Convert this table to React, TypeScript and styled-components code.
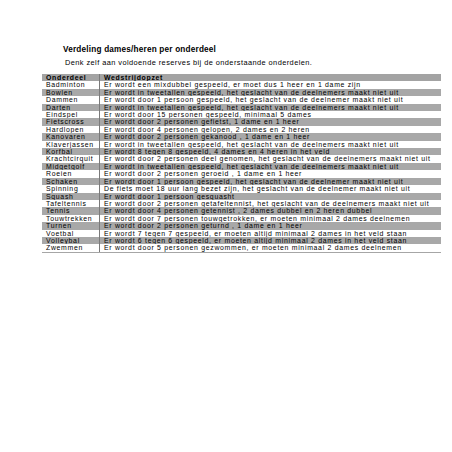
import React from 'react';
import styled, { createGlobalStyle } from 'styled-components';

const GlobalStyle = createGlobalStyle`
  html, body {
    margin: 0;
    padding: 0;
    background: #ffffff;
  }
  body {
    font-family: "Liberation Sans", Arial, sans-serif;
    color: #000000;
  }
`;

const Page = styled.div`
  width: 452px;
  height: 452px;
  box-sizing: border-box;
  padding: 45px 11px 0 42px;
  background: #ffffff;
`;

const Title = styled.h1`
  margin: 0 0 0 21px;
  font-size: 8.2px;
  letter-spacing: 0.2px;
  line-height: 10px;
  font-weight: 700;
`;

const Intro = styled.p`
  margin: 3px 0 0 23px;
  font-size: 7.4px;
  letter-spacing: 0.43px;
  line-height: 10px;
`;

const Table = styled.div`
  margin-top: 6px;
  width: 399px;
  border-bottom: 1px solid #a6a6a6;
`;

const Row = styled.div<{ $shade: 'head' | 'gray' | 'white' }>`
  display: grid;
  grid-template-columns: 58px 1fr;
  height: 7.42px;
  background: ${p => (p.$shade === 'white' ? '#ffffff' : p.$shade === 'head' ? '#a3a3a3' : '#a8a8a8')};
  font-weight: ${p => (p.$shade === 'head' ? 700 : 400)};
`;

const Cell = styled.div<{ $first?: boolean }>`
  padding-left: 4px;
  font-size: 6.9px;
  letter-spacing: 0.7px;
  line-height: 7.42px;
  white-space: nowrap;
  overflow: hidden;
  border-right: ${p => (p.$first ? '1px solid #7a7a7a' : 'none')};
`;

const rows: [string, string][] = [
  ['Badminton', 'Er wordt een mixdubbel gespeeld, er moet dus 1 heer en 1 dame zijn'],
  ['Bowlen', 'Er wordt in tweetallen gespeeld, het geslacht van de deelnemers maakt niet uit'],
  ['Dammen', 'Er wordt door 1 persoon gespeeld, het geslacht van de deelnemer maakt niet uit'],
  ['Darten', 'Er wordt in tweetallen gespeeld, het geslacht van de deelnemers maakt niet uit'],
  ['Eindspel', 'Er wordt door 15 personen gespeeld, minimaal 5 dames'],
  ['Fietscross', 'Er wordt door 2 personen gefietst, 1 dame en 1 heer'],
  ['Hardlopen', 'Er wordt door 4 personen gelopen, 2 dames en 2 heren'],
  ['Kanovaren', 'Er wordt door 2 personen gekanood , 1 dame en 1 heer'],
  ['Klaverjassen', 'Er wordt in tweetallen gespeeld, het geslacht van de deelnemers maakt niet uit'],
  ['Korfbal', 'Er wordt 8 tegen 8 gespeeld, 4 dames en 4 heren in het veld'],
  ['Krachtcirquit', 'Er wordt door 2 personen deel genomen, het geslacht van de deelnemers maakt niet uit'],
  ['Midgetgolf', 'Er wordt in tweetallen gespeeld, het geslacht van de deelnemers maakt niet uit'],
  ['Roeien', 'Er wordt door 2 personen geroeid , 1 dame en 1 heer'],
  ['Schaken', 'Er wordt door 1 persoon gespeeld, het geslacht van de deelnemer maakt niet uit'],
  ['Spinning', 'De fiets moet 18 uur lang bezet zijn, het geslacht van de deelnemer maakt niet uit'],
  ['Squash', 'Er wordt door 1 persoon gesquasht'],
  ['Tafeltennis', 'Er wordt door 2 personen getafeltennist, het geslacht van de deelnemers maakt niet uit'],
  ['Tennis', 'Er wordt door 4 personen getennist , 2 dames dubbel en 2 heren dubbel'],
  ['Touwtrekken', 'Er wordt door 7 personen touwgetrokken, er moeten minimaal 2 dames deelnemen'],
  ['Turnen', 'Er wordt door 2 personen geturnd , 1 dame en 1 heer'],
  ['Voetbal', 'Er wordt 7 tegen 7 gespeeld, er moeten altijd minimaal 2 dames in het veld staan'],
  ['Volleybal', 'Er wordt 6 tegen 6 gespeeld, er moeten altijd minimaal 2 dames in het veld staan'],
  ['Zwemmen', 'Er wordt door 5 personen gezwommen, er moeten minimaal 2 dames deelnemen'],
];

export default function App() {
  return (
    <>
      <GlobalStyle />
      <Page>
        <Title>Verdeling dames/heren per onderdeel</Title>
        <Intro>Denk zelf aan voldoende reserves bij de onderstaande onderdelen.</Intro>
        <Table>
          <Row $shade="head">
            <Cell $first>Onderdeel</Cell>
            <Cell>Wedstrijdopzet</Cell>
          </Row>
          {rows.map(([sport, rule], i) => (
            <Row key={sport} $shade={i % 2 === 0 ? 'white' : 'gray'}>
              <Cell $first>{sport}</Cell>
              <Cell>{rule}</Cell>
            </Row>
          ))}
        </Table>
      </Page>
    </>
  );
}
